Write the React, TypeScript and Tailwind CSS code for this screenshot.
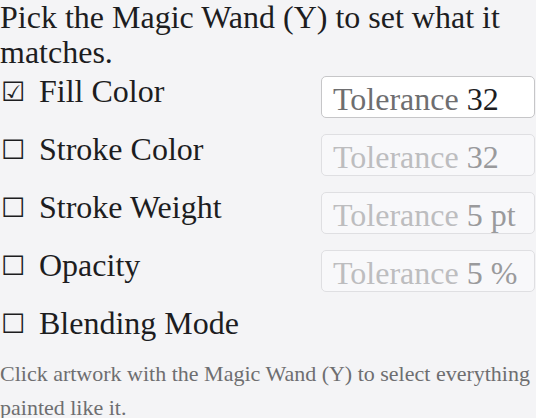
const rows = [
  { label: "Fill Color", on: true, value: "32" },
  { label: "Stroke Color", on: false, value: "32" },
  { label: "Stroke Weight", on: false, value: "5 pt" },
  { label: "Opacity", on: false, value: "5 %" },
  { label: "Blending Mode", on: false, value: null },
];

export default function App() {
  return (
    <div className="min-h-screen bg-[#f4f4f6] text-[#1d1d1f] font-['Liberation_Serif','Times_New_Roman',serif]">
      <p className="text-[32px] leading-[35.4px]">
        Pick the Magic Wand (Y) to set what it matches.
      </p>

      <div className="mt-[3px] flex flex-col gap-[14px]">
        {rows.map((row) => (
          <div key={row.label} className="flex items-start justify-between">
            <div className="flex items-center text-[32px] leading-[35.4px]">
              <span className="w-[39px] pl-[1px] text-[27px] leading-[35px] font-['DejaVu_Sans',sans-serif]">
                {row.on ? "☑" : "☐"}
              </span>
              <span>{row.label}</span>
            </div>
            {row.value && (
              <div
                className={
                  row.on
                    ? "mt-[2px] mr-[1px] h-[42px] w-[214px] rounded-[5px] border border-[#c6c6c8] bg-white pl-[11px] pt-[4px] text-[32px] leading-[36px]"
                    : "mt-[2px] mr-[1px] h-[42px] w-[214px] rounded-[5px] border border-[#dfdfe2] bg-[#f8f8fa] pl-[11px] pt-[4px] text-[32px] leading-[36px]"
                }
              >
                <span className={row.on ? "text-[#6e6e70]" : "text-[#bdbdbf]"}>Tolerance </span>
                <span className={row.on ? "text-[#1d1d1f]" : "text-[#9a9a9c]"}>{row.value}</span>
              </div>
            )}
          </div>
        ))}
      </div>

      <p className="mt-[16px] text-[22px] leading-[34px] text-[#6e6e70]">
        Click artwork with the Magic Wand (Y) to select everything painted like it.
      </p>
    </div>
  );
}
